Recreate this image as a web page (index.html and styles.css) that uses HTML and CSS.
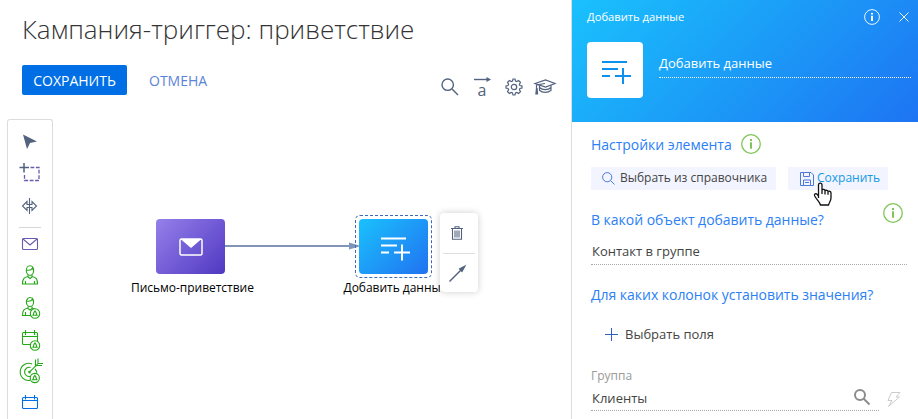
FILE: index.html
```html
<!DOCTYPE html>
<html lang="ru">
<head>
<meta charset="utf-8">
<title>Кампания-триггер: приветствие</title>
<link rel="stylesheet" href="styles.css">
</head>
<body>
<div class="app">
  <main class="designer">
    <h1 class="title">Кампания-триггер: приветствие</h1>
    <div class="actions">
      <button class="btn btn-primary">СОХРАНИТЬ</button>
      <button class="btn btn-link">ОТМЕНА</button>
      <div class="tools">
        <svg width="18" height="18" viewBox="0 0 18 18"><circle cx="6.7" cy="6.7" r="5.7"/><path d="M11 11l6 6"/></svg>
        <span class="translate">
          <svg width="18" height="6" viewBox="0 0 18 6"><path d="M0 2.500h14"/><path class="solid" d="M12.500 0L17 2.500 12.500 5z"/></svg>
          <span>a</span>
        </span>
        <svg class="gear" width="18" height="18" viewBox="0 0 18 18"><circle cx="9" cy="9" r="2.700"/><path d="M7.500 3l.5-2h2l.5 2 1.300.6 1.800-1.100 1.900 1.900-1.100 1.800.5 1.300 2.100.5v2l-2.100.5-.5 1.300 1.100 1.800-1.900 1.900-1.800-1.100-1.300.5-.5 2.100H8l-.5-2.100-1.300-.5-1.800 1.100-1.900-1.900 1.100-1.800-.6-1.300L1 10V8l2-.5.6-1.300-1.100-1.800 1.900-1.900 1.800 1.100z"/></svg>
        <svg class="cap" width="22" height="18" viewBox="0 0 22 18"><path d="M1 5.500L11.500 2 21 5.500 11.500 9z"/><path d="M5.500 7.300v5c3 2.700 8.500 2.700 11.500 0v-5M5.500 9.500c3 2.700 8.500 2.700 11.500 0M11 5.500L2.500 7v4"/><path class="solid" d="M2 10h1.600l.6 6.500H1.200z"/></svg>
      </div>
    </div>
    <div class="workspace">
      <aside class="palette">
        <svg class="p-arrow" width="22" height="20" viewBox="0 0 22 20"><path d="M4 2.500L18 9.500 11 11 8 17z"/></svg>
        <svg class="p-slate" width="22" height="22" viewBox="0 0 22 22"><path stroke-width="1.500" d="M5 0v9.500M.5 4.500h9.500"/><g class="p-violet" stroke-width="1.300" stroke-dasharray="3.800 1.600"><path d="M11.500 4.500h8.500v13H5.500v-7"/></g></svg>
        <svg class="p-slate" width="22" height="20" viewBox="0 0 22 20"><path d="M10.500 2v16M8 5.500L3.500 10l4.500 4.500v-3h5v3L17.500 10l-4.500-4.500v3H8z"/></svg>
        <hr>
        <svg class="p-violet" width="22" height="20" viewBox="0 0 22 20"><rect x="3.500" y="4.500" width="15" height="11" rx="1"/><path d="M4 5l7 6 7-6"/></svg>
        <svg class="p-green first" width="22" height="24" viewBox="0 0 22 24"><ellipse cx="11" cy="6.500" rx="3.700" ry="4.700"/><path d="M7.500 6c3 .8 5-.3 6-2 0 1 .4 1.500 1 2M9 11v2l2 1.500 2-1.500v-2M9 12.500c-4 1-5.500 2-5.500 7.500h15c0-5.500-1.500-6.500-5.500-7.500M6.500 20v-3M15.500 20v-3"/></svg>
        <svg class="p-green" width="22" height="24" viewBox="0 0 22 24"><ellipse cx="11" cy="6" rx="3.600" ry="4.500"/><path d="M7.500 5c3 .8 5-.3 6-2 0 1 .4 1.500 1 2M9 10.500v2l2 1.500 2-1.500v-2M9 12c-4 1-5.500 2-5.500 7.500h8M6.500 19v-3M13 12c2 .5 3.500 1 4.500 2"/><circle class="badge" cx="16" cy="17.500" r="4.700"/><path d="M13.300 19.200h5.400M14.200 19l.8-2.700 1-1.300 1 1.300.8 2.700"/></svg>
        <svg class="p-green" width="22" height="24" viewBox="0 0 22 24"><rect x="3.500" y="4.500" width="15" height="12" rx="1"/><path d="M3.500 8.500h15M6.500 2v5M15.500 2v5"/><circle class="badge" cx="16" cy="17.500" r="4.700"/><path d="M13.300 19.200h5.400M14.200 19l.8-2.700 1-1.300 1 1.300.8 2.700"/></svg>
        <svg class="p-green" width="24" height="24" viewBox="0 0 24 24"><path d="M14 3.900A8.600 8.600 0 1 0 12 20.400M12.500 7.500A4.600 4.600 0 1 0 12.500 16.300M11.500 12.100l7-7M17.500-.5v6H24M20 -1.500v5H25M17.500 6.500l2.500-3"/><circle class="dot" cx="11.500" cy="12.100" r="1.300"/><path d="M17 9c1.500 1.500 2 3 1.800 5"/><circle class="badge" cx="16.800" cy="18" r="4.600"/><path d="M14.100 19.700h5.400M15 19.500l.8-2.700 1-1.300 1 1.300.8 2.700"/></svg>
        <svg class="p-blue" width="22" height="20" viewBox="0 0 22 20"><rect x="3.500" y="4.500" width="15" height="11" rx="1"/><path d="M3.500 7.500h15M6.500 2v4.500M15.500 2v4.500"/></svg>
      </aside>
      <div class="canvas">
        <svg class="connector" width="136" height="10" viewBox="0 0 136 10"><path d="M0 5h126" /><path class="head" d="M124 1.500L136 5l-12 3.500z"/></svg>
        <div class="node node-mail">
          <svg width="24" height="18" viewBox="0 0 24 18"><rect x="1" y="1" width="22" height="16" rx="1.500"/><path d="M1.500 1h21L12 10z"/></svg>
        </div>
        <div class="node-label label-mail">Письмо-приветствие</div>
        <div class="selection"></div>
        <div class="node node-data">
          <svg width="29" height="24" viewBox="0 0 29 24"><path d="M0 3.500h25M0 10.500h16M0 17.500h8M13 17.500h16M21 9.500v16"/></svg>
        </div>
        <div class="node-label label-data">Добавить данные</div>
        <div class="node-menu">
          <div class="menu-cell"><svg width="12" height="14" viewBox="0 0 12 14"><path d="M0 2.500h12M4 2.500V.700h4v1.800M1.500 3v10.300h9V3M4 4.500v7M6 4.500v7M8 4.500v7"/></svg></div>
          <div class="menu-cell"><svg width="17" height="17" viewBox="0 0 17 17"><path stroke-width="1.500" d="M.5 16.500L12 5"/><path class="tip" d="M16 1L10.500 4l2.500 2.500z"/></svg></div>
        </div>
      </div>
    </div>
  </main>
  <section class="panel">
    <header class="panel-head">
      <div class="head-bar">
        <span class="head-title">Добавить данные</span>
        <svg class="head-info" width="16" height="16" viewBox="0 0 16 16"><circle cx="8" cy="8" r="7.400"/><path d="M8 4v1.600M8 6.700v5.200"/></svg>
        <svg class="close" width="10" height="10" viewBox="0 0 10 10"><path d="M.5.5l9 9M9.500.5l-9 9"/></svg>
      </div>
      <div class="head-main">
        <div class="tile"><svg width="29" height="24" viewBox="0 0 29 24"><path d="M0 4h25M0 11h16M0 18h8M13 18h16M21 10v16"/></svg></div>
        <div class="caption">Добавить данные</div>
      </div>
    </header>
    <div class="panel-body">
      <div class="row-settings"><h2>Настройки элемента</h2>
        <svg class="info" width="20" height="20" viewBox="0 0 20 20"><circle cx="10" cy="10" r="9.300"/><path d="M10 5v2M10 8.200v6.600"/></svg></div>
      <div class="row-buttons">
        <button class="soft pick"><svg width="13" height="13" viewBox="0 0 13 13"><circle cx="5.200" cy="5.200" r="4.600"/><path d="M8.500 8.500l4 4"/></svg><span>Выбрать из справочника</span></button>
        <button class="soft save"><svg width="14" height="14" viewBox="0 0 14 14"><path d="M.5.5h10.500l2.500 2.500v10.500H.5zM3.500 .5v4h6V.5M3.500 13.500V8h7v5.500M5 10.500h4"/></svg><span>Сохранить</span></button>
        <svg class="cursor" width="20" height="25" viewBox="0 0 20 25"><path d="M5.500 16V3c0-2.600 3.500-2.600 3.500 0v5c1-.9 2.700-.7 3 .6 1.200-.7 2.600-.3 3 .8 1.300-.5 3 .1 3 1.600v5c0 3-2 4.500-2.500 7h-8C7 20.500 4 18 1.700 14c-1-2 1.300-3 2.400-1.700L5.500 14M9 8v4M12 9v3.500M15 9.700v3"/></svg>
      </div>
      <div class="row-object"><h2>В какой объект добавить данные?</h2>
        <svg class="info" width="20" height="20" viewBox="0 0 20 20"><circle cx="10" cy="10" r="9.300"/><path d="M10 5v2M10 8.200v6.600"/></svg></div>
      <div class="field field-object">Контакт в группе</div>
      <h2 class="columns-title">Для каких колонок установить значения?</h2>
      <div class="add-fields"><svg width="13" height="13" viewBox="0 0 13 13"><path d="M0 6.500h13M6.500 0v13"/></svg><span>Выбрать поля</span></div>
      <div class="group-label">Группа</div>
      <div class="group-row">
        <div class="field field-group"><span>Клиенты</span>
          <svg width="16" height="16" viewBox="0 0 16 16"><circle cx="6" cy="6" r="5"/><path d="M9.500 9.500l6 6"/></svg></div>
        <svg class="bolt" width="14" height="15" viewBox="0 0 14 15"><path d="M4.500.5h8.500L9 5h3.500L1.500 14.500 5 8.500H1z"/></svg>
      </div>
    </div>
  </section>
</div>
</body>
</html>
```
FILE: styles.css
```css
* { box-sizing: border-box; }
html, body { margin: 0; height: 100%; overflow: hidden; }
body { font-family: "Open Sans", sans-serif; background: #fff; color: #444; }
svg { display: block; flex: none; fill: none; overflow: visible; }
h1, h2 { margin: 0; font-weight: 400; white-space: nowrap; }
button { border: 0; padding: 0; background: none; font: inherit; white-space: nowrap; }

.app { display: flex; width: 918px; height: 419px; }
.designer { width: 571px; display: flex; flex-direction: column; }

.title { margin: 11px 0 0 22px; height: 37px; line-height: 36px; font-size: 26px; font-weight: 300; color: #333; }
.actions { display: flex; height: 54px; margin-top: 17px; padding-left: 22px; align-items: flex-start; }
.btn { height: 30px; font-size: 14px; line-height: 31px; }
.btn-primary { width: 105px; background: #006fe6; color: #fff; border-radius: 2px; }
.btn-link { margin-left: 22px; color: #5c83d8; }
.tools { display: flex; align-items: center; margin: 13px 15px 0 auto; height: 18px; stroke: #53627f; stroke-width: 1.4; }
.tools .solid { fill: #53627f; stroke: none; }
.translate { width: 18px; height: 20px; margin-left: 15px; display: flex; flex-direction: column; color: #53627f; font-size: 16px; line-height: 14px; padding-right: 2px; text-align: center; }
.gear { margin-left: 13px; stroke-width: 1.2; }
.cap { margin-left: 11px; stroke-width: 1.2; }

.workspace { display: flex; height: 300px; }
.palette { width: 46px; margin-left: 7px; border: 1px solid #dcdcdc; border-bottom: 0; border-radius: 3px 3px 0 0; display: flex; flex-direction: column; align-items: center; padding-top: 12px; stroke-width: 1.1; }
.p-arrow { fill: #53627f; }
.p-slate { stroke: #53627f; margin-top: 11px; }
.p-violet { stroke: #6a5aae; }
.palette hr { width: 22px; height: 1px; border: 0; background: #d8d8d8; margin: 11px 0 6px; flex: none; }
.p-green { stroke: #25a818; margin-top: 8px; }
.p-green.first { margin-top: 10px; }
.dot { fill: #25a818; stroke: none; }
.p-blue { stroke: #006fe6; margin-top: 9px; }
.badge { fill: #fff; }

.canvas { position: relative; width: 518px; height: 300px; overflow: hidden; }
.node { position: absolute; top: 100px; width: 69px; height: 55px; border-radius: 4px; display: flex; align-items: center; justify-content: center; stroke: #fff; }
.node-mail { left: 103px; background: linear-gradient(135deg, #9580ea, #5138c2); stroke-width: 1.5; }
.node-mail path { fill: #fff; stroke: none; }
.node-data { left: 306px; background: linear-gradient(135deg, #1ac1fd, #2172f1); stroke-width: 2; padding-left: 4px; }
.selection { position: absolute; left: 302px; top: 96px; width: 77px; height: 63px; border: 1px dashed #3d69bd; border-radius: 5px; }
.connector { position: absolute; left: 172px; top: 122px; stroke: #8195b8; stroke-width: 2; }
.connector .head { fill: #8195b8; stroke: none; }
.node-label { position: absolute; top: 160px; font-size: 12px; line-height: 18px; color: #000; white-space: nowrap; letter-spacing: -.03px; }
.label-mail { left: 78px; }
.label-data { left: 290.500px; }
.node-menu { position: absolute; left: 387px; top: 94px; width: 38px; height: 79px; border-radius: 4px; background: #fff; box-shadow: 0 0 7px rgba(0,0,0,.2); padding: 0 3px; stroke: #53627f; stroke-width: 1.1; }
.menu-cell { height: 40px; display: flex; align-items: center; justify-content: center; padding-right: 5px; }
.menu-cell:first-child { padding-bottom: 1px; }
.menu-cell + .menu-cell { border-top: 1px solid #e0e0e0; padding-right: 4px; padding-bottom: 1px; }
.tip { fill: #53627f; }

.panel { width: 347px; border-left: 1px solid #dcdcdc; }
.panel-head { height: 122px; padding: 8px 7px 0 15px; color: #fff; background: linear-gradient(135deg, #1ac1fd, #1b9cf7 50%, #1e74f3); stroke: #fff; }
.head-bar { display: flex; align-items: center; height: 18px; padding-right: 2px; }
.head-title { font-size: 11.2px; line-height: 18px; margin-right: auto; }
.head-info { margin-right: 19px; stroke-width: .9; }
.close { stroke-width: .9; }
.head-main { display: flex; margin-top: 16px; }
.tile { width: 56px; height: 56px; border-radius: 4px; background: #fff; display: flex; align-items: center; justify-content: center; padding-left: 3px; stroke: #0e91ec; stroke-width: 2; }
.caption { flex: 1; margin-left: 16px; height: 36px; padding-top: 11px; font-size: 13px; line-height: 20px; border-bottom: 1px dotted #fff; }

.panel-body { padding: 12px 7px 0 19px; font-size: 13px; }
h2 { font-size: 14px; line-height: 20px; letter-spacing: -.03px; color: #2b80f5; }
.info { stroke: #7fc658; stroke-width: 1.3; }
.info path, .head-info path { stroke-width: 2; }
.row-settings { display: flex; height: 21px; align-items: flex-start; }
.row-settings h2 { margin-top: 1px; }
.row-settings .info { margin-left: 9px; }
.row-buttons { position: relative; display: flex; gap: 12px; margin-top: 12px; }
.soft { display: flex; height: 23px; align-items: center; background: #f2f4ff; color: #444; font-size: 12px; line-height: 20px; stroke: #4d79d9; }
.soft span { margin-top: -1px; }
.pick { width: 185px; padding-left: 11px; }
.pick span { margin-left: 5px; }
.save { width: 100px; padding-left: 12px; color: #129ae5; }
.save span { margin-left: 3px; }
.cursor { position: absolute; left: 222px; top: 15px; fill: #fff; stroke: #111; stroke-width: 1.3; }
.row-object { display: flex; margin-top: 13px; height: 30px; justify-content: space-between; }
.row-object h2 { margin-top: 7px; }
.row-object .info { margin-right: 8px; }
.field { border-bottom: 1px dotted #aaa; font-size: 13px; line-height: 20px; white-space: nowrap; padding-left: 1px; }
.field-object { margin: 8px 4px 0 0; height: 24px; }
.columns-title { margin-top: 20px; }
.add-fields { display: flex; align-items: center; margin: 18px 0 0 14px; height: 22px; stroke: #2f5fc0; }
.add-fields span { margin-left: 7px; }
.group-label { margin-top: 22px; font-size: 12px; line-height: 18px; color: #999; }
.group-row { display: flex; margin-top: 3px; }
.field-group { width: 288px; height: 23px; display: flex; justify-content: space-between; padding-right: 9px; }
.field-group svg { stroke: #8c8c8c; stroke-width: 2; margin-top: 1px; }
.bolt { margin: 4px 0 0 8px; stroke: #ccc; }
```
